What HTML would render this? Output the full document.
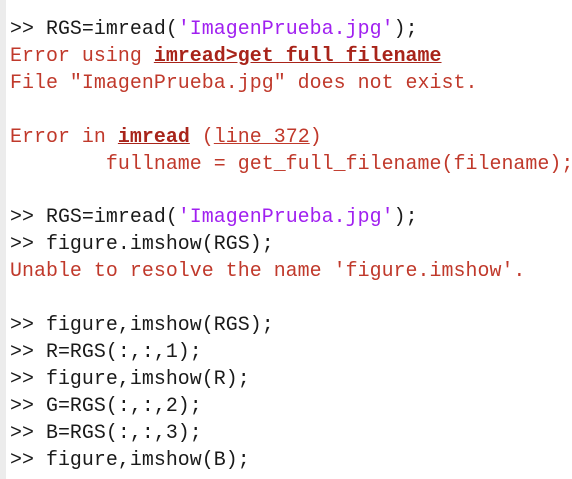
<!DOCTYPE html>
<html><head><meta charset="utf-8"><style>
html,body{margin:0;padding:0;background:#fff;width:572px;height:479px;overflow:hidden}
.strip{position:absolute;left:0;top:0;width:6px;height:479px;background:#ececec}
pre{position:absolute;left:10px;top:16px;margin:0;font-family:"Liberation Mono","Courier New",monospace;font-size:19.9px;line-height:26.9px;color:#1a1a1a;letter-spacing:0.05px}
.e{color:#c0392b}
.p{color:#a020f0}
.b{font-weight:bold;text-decoration:underline;color:#a8241a}
.u{text-decoration:underline}
</style></head><body><div class="strip"></div>
<pre>&gt;&gt; RGS=imread(<span class="p">'ImagenPrueba.jpg'</span>);
<span class="e">Error using <span class="b">imread&gt;get_full_filename</span></span>
<span class="e">File "ImagenPrueba.jpg" does not exist.</span>

<span class="e">Error in <span class="b">imread</span> (<span class="u">line 372</span>)</span>
<span class="e">        fullname = get_full_filename(filename);</span>

&gt;&gt; RGS=imread(<span class="p">'ImagenPrueba.jpg'</span>);
&gt;&gt; figure.imshow(RGS);
<span class="e">Unable to resolve the name 'figure.imshow'.</span>

&gt;&gt; figure,imshow(RGS);
&gt;&gt; R=RGS(:,:,1);
&gt;&gt; figure,imshow(R);
&gt;&gt; G=RGS(:,:,2);
&gt;&gt; B=RGS(:,:,3);
&gt;&gt; figure,imshow(B);</pre>
</body></html>
